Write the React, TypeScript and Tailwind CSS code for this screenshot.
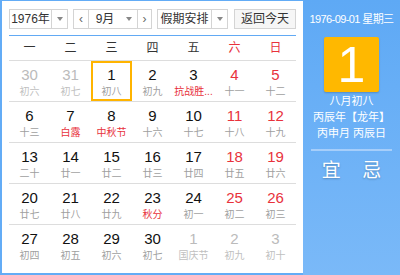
import React from 'react';

type Day = {
  num: number;
  lunar: string;
  other?: boolean; // not in this month
  red?: boolean; // weekend number
  fest?: boolean; // festival / solar term in red
  selected?: boolean;
};

const WEEK = ['一', '二', '三', '四', '五', '六', '日'];

const ROWS: Day[][] = [
  [
    { num: 30, lunar: '初六', other: true },
    { num: 31, lunar: '初七', other: true },
    { num: 1, lunar: '初八', selected: true },
    { num: 2, lunar: '初九' },
    { num: 3, lunar: '抗战胜...', fest: true },
    { num: 4, lunar: '十一', red: true },
    { num: 5, lunar: '十二', red: true },
  ],
  [
    { num: 6, lunar: '十三' },
    { num: 7, lunar: '白露', fest: true },
    { num: 8, lunar: '中秋节', fest: true },
    { num: 9, lunar: '十六' },
    { num: 10, lunar: '十七' },
    { num: 11, lunar: '十八', red: true },
    { num: 12, lunar: '十九', red: true },
  ],
  [
    { num: 13, lunar: '二十' },
    { num: 14, lunar: '廿一' },
    { num: 15, lunar: '廿二' },
    { num: 16, lunar: '廿三' },
    { num: 17, lunar: '廿四' },
    { num: 18, lunar: '廿五', red: true },
    { num: 19, lunar: '廿六', red: true },
  ],
  [
    { num: 20, lunar: '廿七' },
    { num: 21, lunar: '廿八' },
    { num: 22, lunar: '廿九' },
    { num: 23, lunar: '秋分', fest: true },
    { num: 24, lunar: '初一' },
    { num: 25, lunar: '初二', red: true },
    { num: 26, lunar: '初三', red: true },
  ],
  [
    { num: 27, lunar: '初四' },
    { num: 28, lunar: '初五' },
    { num: 29, lunar: '初六' },
    { num: 30, lunar: '初七' },
    { num: 1, lunar: '国庆节', other: true },
    { num: 2, lunar: '初九', other: true },
    { num: 3, lunar: '初十', other: true },
  ],
];

const FONT = { fontFamily: '"Liberation Sans", "Noto Sans CJK SC", sans-serif' };

function Caret() {
  return <span className="block h-0 w-0 border-x-[3px] border-t-[4px] border-x-transparent border-t-[#888]" />;
}

function Select({ label, width, textW }: { label: string; width: string; textW: string }) {
  return (
    <div className={`flex h-[20px] border border-[#d4d4d4] bg-white ${width}`}>
      <div className={`flex items-center justify-center text-[12px] text-[#333] ${textW}`}>{label}</div>
      <div className="flex flex-1 items-center justify-center border-l border-[#d4d4d4]">
        <Caret />
      </div>
    </div>
  );
}

function Cell({ d }: { d: Day }) {
  let numColor = 'text-[#111]';
  if (d.other) numColor = 'text-[#bbb]';
  else if (d.red) numColor = 'text-[#e8323c]';
  let lunarColor = 'text-[#a0a0a0]';
  if (d.other) lunarColor = 'text-[#c0c0c0]';
  else if (d.fest) lunarColor = 'text-[#e8323c]';
  return (
    <div
      className={`flex h-[40px] flex-col items-center border-2 ${
        d.selected ? 'border-[#ffb400]' : 'border-transparent'
      }`}
    >
      <div className={`mt-[3px] h-[18px] text-[15px] leading-[18px] ${numColor}`}>{d.num}</div>
      <div className={`mt-[1px] h-[13px] whitespace-nowrap text-[10px] leading-[13px] ${lunarColor}`}>{d.lunar}</div>
    </div>
  );
}

export default function App() {
  return (
    <div className="flex h-[275px] w-[400px] overflow-hidden bg-[#63acf6]" style={FONT}>
      {/* calendar */}
      <div className="mb-[2px] ml-[2px] mt-[1px] w-[301px] bg-white pl-[7px] pt-[8px]">
        <div className="flex w-[287px] items-center">
          <Select label="1976年" width="w-[59px]" textW="w-[41px]" />
          <div className="ml-[5px] flex h-[20px] w-[79px] border border-[#d4d4d4]">
            <div className="flex w-[15px] items-center justify-center border-r border-[#d4d4d4] text-[12px] text-[#666]">
              ‹
            </div>
            <div className="flex w-[32px] items-center justify-center text-[12px] text-[#333]">9月</div>
            <div className="flex w-[16px] items-center justify-center">
              <Caret />
            </div>
            <div className="flex flex-1 items-center justify-center border-l border-[#d4d4d4] text-[12px] text-[#666]">
              ›
            </div>
          </div>
          <div className="ml-[5px]">
            <Select label="假期安排" width="w-[71px]" textW="w-[53px]" />
          </div>
          <button className="ml-auto flex h-[20px] w-[62px] items-center justify-center border border-[#d4d4d4] bg-[#f6f6f6] text-[12px] text-[#333]">
            返回今天
          </button>
        </div>

        <div className="mt-[6px] w-[287px] border-t border-[#62aaf4]">
          <div className="grid h-[25px] grid-cols-[repeat(7,41px)] items-center border-b border-[#ddd]">
            {WEEK.map((w, i) => (
              <div key={w} className={`text-center text-[12px] ${i > 4 ? 'text-[#e8323c]' : 'text-[#333]'}`}>
                {w}
              </div>
            ))}
          </div>
          {ROWS.map((row, r) => (
            <div
              key={r}
              className={`grid grid-cols-[repeat(7,41px)] ${r < ROWS.length - 1 ? 'border-b border-[#ddd]' : ''}`}
            >
              {row.map((d, i) => (
                <Cell key={i} d={d} />
              ))}
            </div>
          ))}
        </div>
      </div>

      {/* side panel */}
      <div className="flex flex-1 flex-col items-center bg-gradient-to-b from-[#5ea9f5] to-[#7ab9f8] text-white">
        <div className="mt-[12px] whitespace-nowrap text-[11px] leading-[14px] tracking-[-0.6px]">1976-09-01 星期三</div>
        <div className="mt-[11px] flex h-[55px] w-[55px] items-center justify-center rounded-[2px] bg-[#ffb800] text-[50px] font-light leading-none shadow-[0_1px_2px_rgba(0,0,0,0.2)]">
          1
        </div>
        <div className="mt-[1px] flex flex-col items-center text-[11px] leading-[16px]">
          <div>八月初八</div>
          <div>丙辰年【龙年】</div>
          <div>丙申月 丙辰日</div>
        </div>
        <div className="mt-[8px] h-[2px] w-[81px] bg-[#a6cefa]" />
        <div className="mt-[8px] flex w-[81px] justify-around text-[19px] leading-[24px] [text-shadow:0_1px_2px_rgba(0,0,0,0.25)]">
          <span>宜</span>
          <span>忌</span>
        </div>
      </div>
    </div>
  );
}
